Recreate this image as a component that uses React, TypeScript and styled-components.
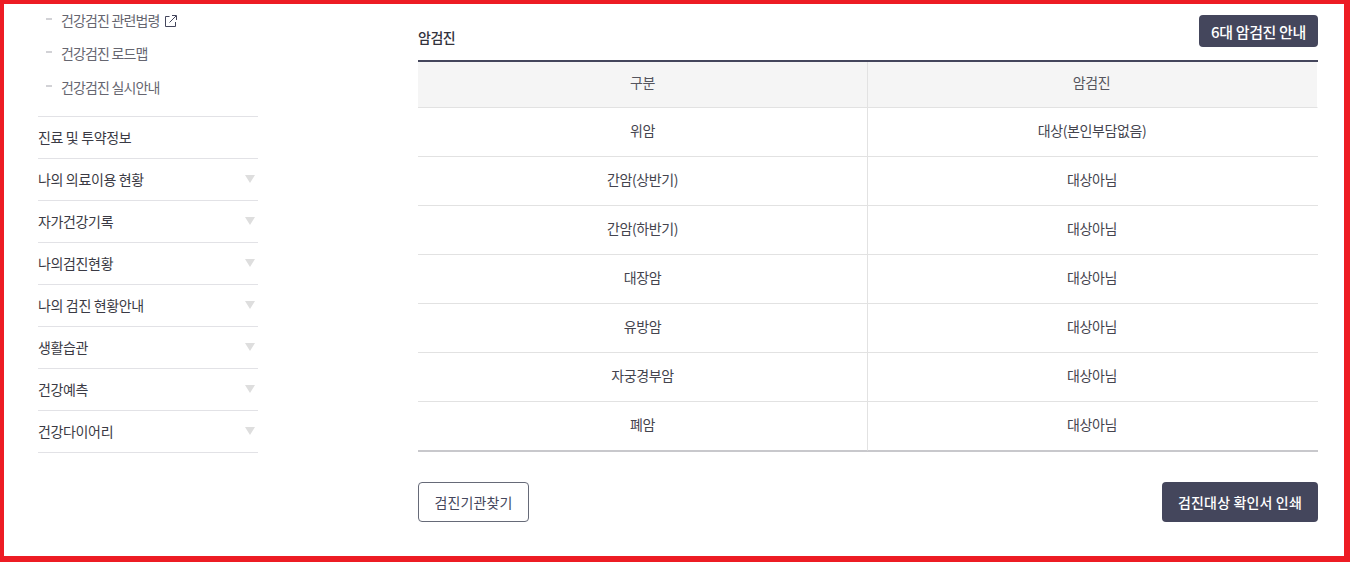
import React from "react";
import styled, { createGlobalStyle } from "styled-components";

const GlobalStyle = createGlobalStyle`
    html, body {
        margin: 0;
        padding: 0;
        background: #fff;
    }
    * {
        box-sizing: border-box;
    }
    body {
        font-family: "Noto Sans CJK KR", "Noto Sans", sans-serif;
        color: #33333d;
    }
`

const Frame = styled.div`
    display: flex;
    width: 1350px;
    height: 562px;
    overflow: hidden;
    background: #fff;
    border: solid #ed1c24;
    border-width: 4px 6px 6px 4px;
    padding-left: 34px;
`

const Sidebar = styled.nav`
    width: 220px;
    margin-right: 160px;
    flex-shrink: 0;
`

const SubList = styled.ul`
    list-style: none;
    margin: -0.5px 0 0;
    padding: 0 0 12px 8px;
`

const SubItem = styled.li`
    display: flex;
    align-items: center;
    height: 33.5px;
    padding-bottom: 1px;
    font-size: 14px;
    letter-spacing: -0.85px;
    color: #666670;

    &::before {
        content: "";
        width: 6px;
        height: 2px;
        background: #d2d2d6;
        margin-right: 9px;
        margin-top: -2px;
    }

    svg {
        margin-left: 5px;
    }
`

const MenuItem = styled.div`
    display: flex;
    align-items: center;
    justify-content: space-between;
    height: 42px;
    padding: 0 3px 2px 0;
    border-top: 1px solid #e2e2e6;
    font-size: 14px;
    letter-spacing: -0.35px;
    color: #3a3a44;

    &:last-child {
        height: 43px;
        border-bottom: 1px solid #e2e2e6;
    }
`

const Arrow = styled.span`
    width: 0;
    height: 0;
    margin-top: 1px;
    border-style: solid;
    border-width: 8px 5.5px 0 5.5px;
    border-color: #dedede transparent transparent transparent;
`

const Main = styled.main`
    width: 900px;
    padding-top: 11px;
`

const TitleRow = styled.div`
    display: flex;
    align-items: flex-end;
    justify-content: space-between;
    height: 45px;
`

const Title = styled.h3`
    margin: 0 0 13px;
    font-size: 14px;
    font-weight: 500;
    letter-spacing: -0.45px;
    color: #33333d;
`

const DarkButton = styled.button<{ $large?: boolean }>`
    font-family: inherit;
    border: 0;
    border-radius: 4px;
    background: #44465c;
    color: #fff;
    font-weight: 500;
    font-size: ${(p) => (p.$large ? "14px" : "15px")};
    letter-spacing: ${(p) => (p.$large ? "0.15px" : "-0.35px")};
    align-self: ${(p) => (p.$large ? "auto" : "flex-start")};
    width: ${(p) => (p.$large ? "156px" : "119px")};
    height: ${(p) => (p.$large ? "40px" : "32px")};
    padding: 0;
`

const OutlineButton = styled.button`
    font-family: inherit;
    width: 111px;
    height: 40px;
    padding: 0;
    border: 1px solid #666a78;
    border-radius: 4px;
    background: #fff;
    color: #44465c;
    font-size: 14px;
    letter-spacing: 0.1px;
`

const Table = styled.table`
    width: 900px;
    margin-top: 0;
    border-collapse: separate;
    border-spacing: 0;
    table-layout: fixed;
    border-top: 2px solid #44465c;
    border-bottom: 1px solid #c8c8cc;
`

const Head = styled.th`
    height: 46px;
    padding: 0 0 5px;
    background: #f5f5f5;
    border-bottom: 1px solid #e2e2e2;
    font-size: 14px;
    font-weight: 400;
    letter-spacing: -0.4px;
    color: #55555e;

    &:first-child {
        width: 450px;
        border-right: 1px solid #e2e2e2;
    }

    &:last-child {
        padding-right: 2px;
        border-right: 1px solid #fff;
    }
`

const Cell = styled.td`
    height: 49px;
    padding: 0 0 5px;
    text-align: center;
    border-bottom: 1px solid #e2e2e2;
    font-size: 14px;
    letter-spacing: -0.4px;
    color: #44444e;

    &:first-child {
        border-right: 1px solid #e2e2e2;
    }

    &:last-child {
        padding-right: 2px;
    }

    tr:last-child > & {
        border-bottom: 1px solid #c8c8cc;
    }
`

const Actions = styled.div`
    display: flex;
    justify-content: space-between;
    margin-top: 30px;
`

const subItems = ["건강검진 관련법령", "건강검진 로드맵", "건강검진 실시안내"];

const menuItems = [
    { label: "진료 및 투약정보", arrow: false },
    { label: "나의 의료이용 현황", arrow: true },
    { label: "자가건강기록", arrow: true },
    { label: "나의검진현황", arrow: true },
    { label: "나의 검진 현황안내", arrow: true },
    { label: "생활습관", arrow: true },
    { label: "건강예측", arrow: true },
    { label: "건강다이어리", arrow: true },
];

const rows = [
    ["위암", "대상(본인부담없음)"],
    ["간암(상반기)", "대상아님"],
    ["간암(하반기)", "대상아님"],
    ["대장암", "대상아님"],
    ["유방암", "대상아님"],
    ["자궁경부암", "대상아님"],
    ["폐암", "대상아님"],
];

const ExternalIcon = () => (
    <svg width="12" height="12" viewBox="0 0 12 12" fill="none" stroke="#44465c" strokeWidth="1" style={{ marginTop: 2 }}>
        <path d="M4.5 1.5H.5v10h10V7" />
        <path d="M4.5 7.5 11 1M7 .5h4.5V5" />
    </svg>
);

export default function App() {
    return (
        <>
            <GlobalStyle />
            <Frame>
                <Sidebar>
                    <SubList>
                        {subItems.map((item, i) => (
                            <SubItem key={item}>
                                {item}
                                {i === 0 && <ExternalIcon />}
                            </SubItem>
                        ))}
                    </SubList>
                    {menuItems.map((item) => (
                        <MenuItem key={item.label}>
                            {item.label}
                            {item.arrow && <Arrow />}
                        </MenuItem>
                    ))}
                </Sidebar>
                <Main>
                    <TitleRow>
                        <Title>암검진</Title>
                        <DarkButton>6대 암검진 안내</DarkButton>
                    </TitleRow>
                    <Table>
                        <thead>
                            <tr>
                                <Head>구분</Head>
                                <Head>암검진</Head>
                            </tr>
                        </thead>
                        <tbody>
                            {rows.map(([name, value]) => (
                                <tr key={name}>
                                    <Cell>{name}</Cell>
                                    <Cell>{value}</Cell>
                                </tr>
                            ))}
                        </tbody>
                    </Table>
                    <Actions>
                        <OutlineButton>검진기관찾기</OutlineButton>
                        <DarkButton $large>검진대상 확인서 인쇄</DarkButton>
                    </Actions>
                </Main>
            </Frame>
        </>
    );
}
